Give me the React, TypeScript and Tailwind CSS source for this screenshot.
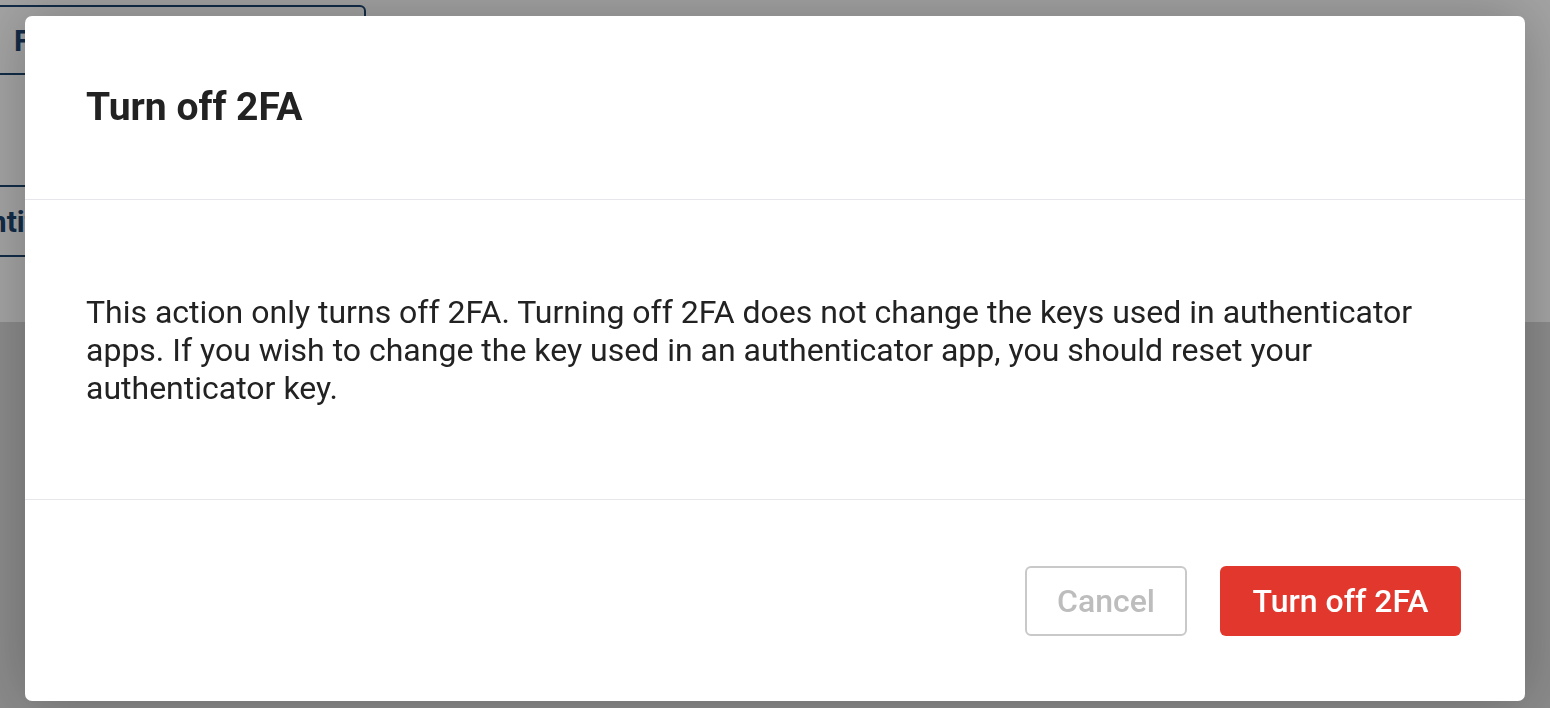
const NAVY = "border-[#1d4470]";

function BackdropPage() {
	return (
		<div className="h-[708px] w-full bg-[#d9d9d9] overflow-hidden">
			<div className="h-[322px] bg-white pt-[5px]">
				<div className={`-ml-[60px] w-[426px] h-[70px] border-2 ${NAVY} rounded-[6px] flex items-center pl-[72px]`}>
					<span className="text-[30px] font-bold text-[#1d4470]">Français</span>
				</div>
				<div className={`mt-[110px] -ml-[60px] w-[426px] h-[72px] border-y-2 ${NAVY} flex items-center pl-[8px]`}>
					<span className="text-[30px] font-bold text-[#1d4470]">Identity</span>
				</div>
			</div>
		</div>
	);
}

function ConfirmDialog() {
	return (
		<div className="w-[1500px] h-[685px] bg-white rounded-[7px] shadow-[0_0_60px_rgba(0,0,0,0.25)] flex flex-col">
			<div className="h-[184px] flex items-center px-[61px] border-b border-[#e6e6eb]">
				<h2 className="text-[39px] font-bold text-[#222222] leading-none">Turn off 2FA</h2>
			</div>
			<div className="h-[300px] flex items-center px-[61px] border-b border-[#e6e6eb]">
				<p className="text-[32px] leading-[38px] text-[#222222] max-w-[1345px]">
					This action only turns off 2FA. Turning off 2FA does not change the keys used in authenticator
					apps. If you wish to change the key used in an authenticator app, you should reset your
					authenticator key.
				</p>
			</div>
			<div className="flex-1 flex items-center justify-end gap-[33px] pr-[64px]">
				<button className="w-[162px] h-[70px] rounded-[6px] border-2 border-[#c9c9c9] text-[32px] font-medium text-[#bdbdbd]">
					Cancel
				</button>
				<button className="w-[241px] h-[70px] rounded-[6px] bg-[#e1372c] text-[32px] font-medium text-white">
					Turn off 2FA
				</button>
			</div>
		</div>
	);
}

export default function App() {
	return (
		<div className="relative w-[1550px] h-[708px] overflow-hidden font-['Roboto',sans-serif]">
			<BackdropPage />
			<div className="fixed inset-0 bg-black/[0.36] pt-[16px] pl-[25px]">
				<ConfirmDialog />
			</div>
		</div>
	);
}
